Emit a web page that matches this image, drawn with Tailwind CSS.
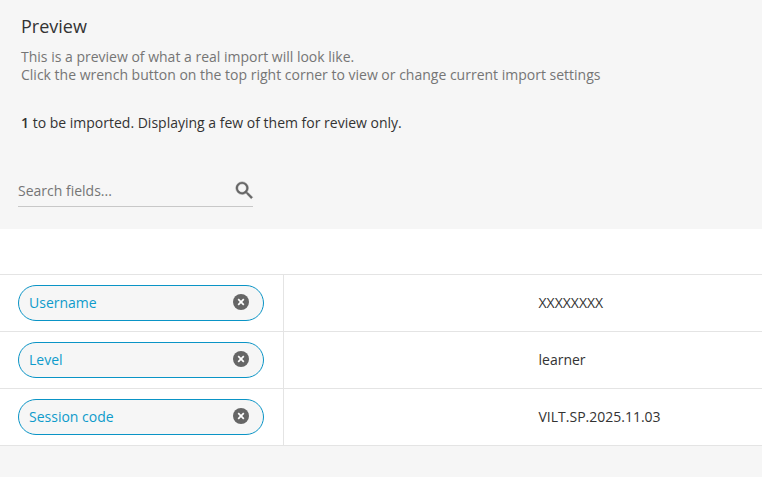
<!DOCTYPE html>
<html>
<head>
    <meta charset="utf-8">
    <title>Preview</title>
    <script src="https://cdn.jsdelivr.net/npm/@tailwindcss/browser@4"></script>
</head>
<body class="w-screen h-screen bg-[#f6f6f6] overflow-hidden font-['Open_Sans',sans-serif] text-[14px] text-[#333]">
    <section class="h-[229px] pl-[18px] pt-[14px]">
        <h1 class="pl-[3px] text-[18px] leading-[24px]">Preview</h1>
        <p class="pl-[3px] mt-[10px] text-[#757575] leading-[18px]">This is a preview of what a real import will look like.<br>Click the wrench button on the top right corner to view or change current import settings</p>
        <p class="pl-[3px] mt-[30px] leading-[18px]"><b class="font-semibold">1</b> to be imported. Displaying a few of them for review only.</p>
        <div class="mt-[42px] w-[235px] h-[33px] flex items-center justify-between border-b border-[#c8c8c8] text-[#757575]">
            <span>Search fields...</span>
            <svg class="w-[23px] h-[23px] mr-[-3px]" viewBox="0 0 24 24" fill="#666" stroke="#666" stroke-width="0.5"><path d="M15.5 14h-.79l-.28-.27A6.47 6.47 0 0 0 16 9.5 6.5 6.5 0 1 0 9.5 16c1.61 0 3.09-.59 4.23-1.57l.27.28v.79l5 4.99L20.49 19l-4.99-5zm-6 0C7.01 14 5 11.99 5 9.5S7.01 5 9.5 5 14 7.01 14 9.5 11.99 14 9.5 14z"/></svg>
        </div>
    </section>
    <section class="bg-white">
        <div class="h-[46px] border-b border-[#e4e4e4]"></div>
        <div class="flex h-[57px] border-b border-[#e4e4e4]">
            <div class="w-[284px] shrink-0 border-r border-[#e4e4e4] pl-[18px] flex items-center">
                <div class="w-[246px] h-[36px] rounded-full border border-[#0a94c6] bg-[#f6f6f6] flex items-center justify-between pb-[2px] pl-[10px] pr-[14px] text-[#0e9bcb]">
                    <span>Username</span>
                    <svg class="w-[16px] h-[16px]" viewBox="0 0 16 16"><circle cx="8" cy="8" r="8" fill="#666"/><path d="M5.2 5.2l5.6 5.6M10.8 5.2l-5.6 5.6" stroke="#fff" stroke-width="1.7"/></svg>
                </div>
            </div>
            <div class="pl-[254.5px] pb-[2px] flex items-center">XXXXXXXX</div>
        </div>
        <div class="flex h-[57px] border-b border-[#e4e4e4]">
            <div class="w-[284px] shrink-0 border-r border-[#e4e4e4] pl-[18px] flex items-center">
                <div class="w-[246px] h-[36px] rounded-full border border-[#0a94c6] bg-[#f6f6f6] flex items-center justify-between pb-[2px] pl-[10px] pr-[14px] text-[#0e9bcb]">
                    <span>Level</span>
                    <svg class="w-[16px] h-[16px]" viewBox="0 0 16 16"><circle cx="8" cy="8" r="8" fill="#666"/><path d="M5.2 5.2l5.6 5.6M10.8 5.2l-5.6 5.6" stroke="#fff" stroke-width="1.7"/></svg>
                </div>
            </div>
            <div class="pl-[254.5px] pb-[2px] flex items-center">learner</div>
        </div>
        <div class="flex h-[57px] border-b border-[#e4e4e4]">
            <div class="w-[284px] shrink-0 border-r border-[#e4e4e4] pl-[18px] flex items-center">
                <div class="w-[246px] h-[36px] rounded-full border border-[#0a94c6] bg-[#f6f6f6] flex items-center justify-between pb-[2px] pl-[10px] pr-[14px] text-[#0e9bcb]">
                    <span>Session code</span>
                    <svg class="w-[16px] h-[16px]" viewBox="0 0 16 16"><circle cx="8" cy="8" r="8" fill="#666"/><path d="M5.2 5.2l5.6 5.6M10.8 5.2l-5.6 5.6" stroke="#fff" stroke-width="1.7"/></svg>
                </div>
            </div>
            <div class="pl-[254.5px] pb-[2px] flex items-center">VILT.SP.2025.11.03</div>
        </div>
    </section>
</body>
</html>
